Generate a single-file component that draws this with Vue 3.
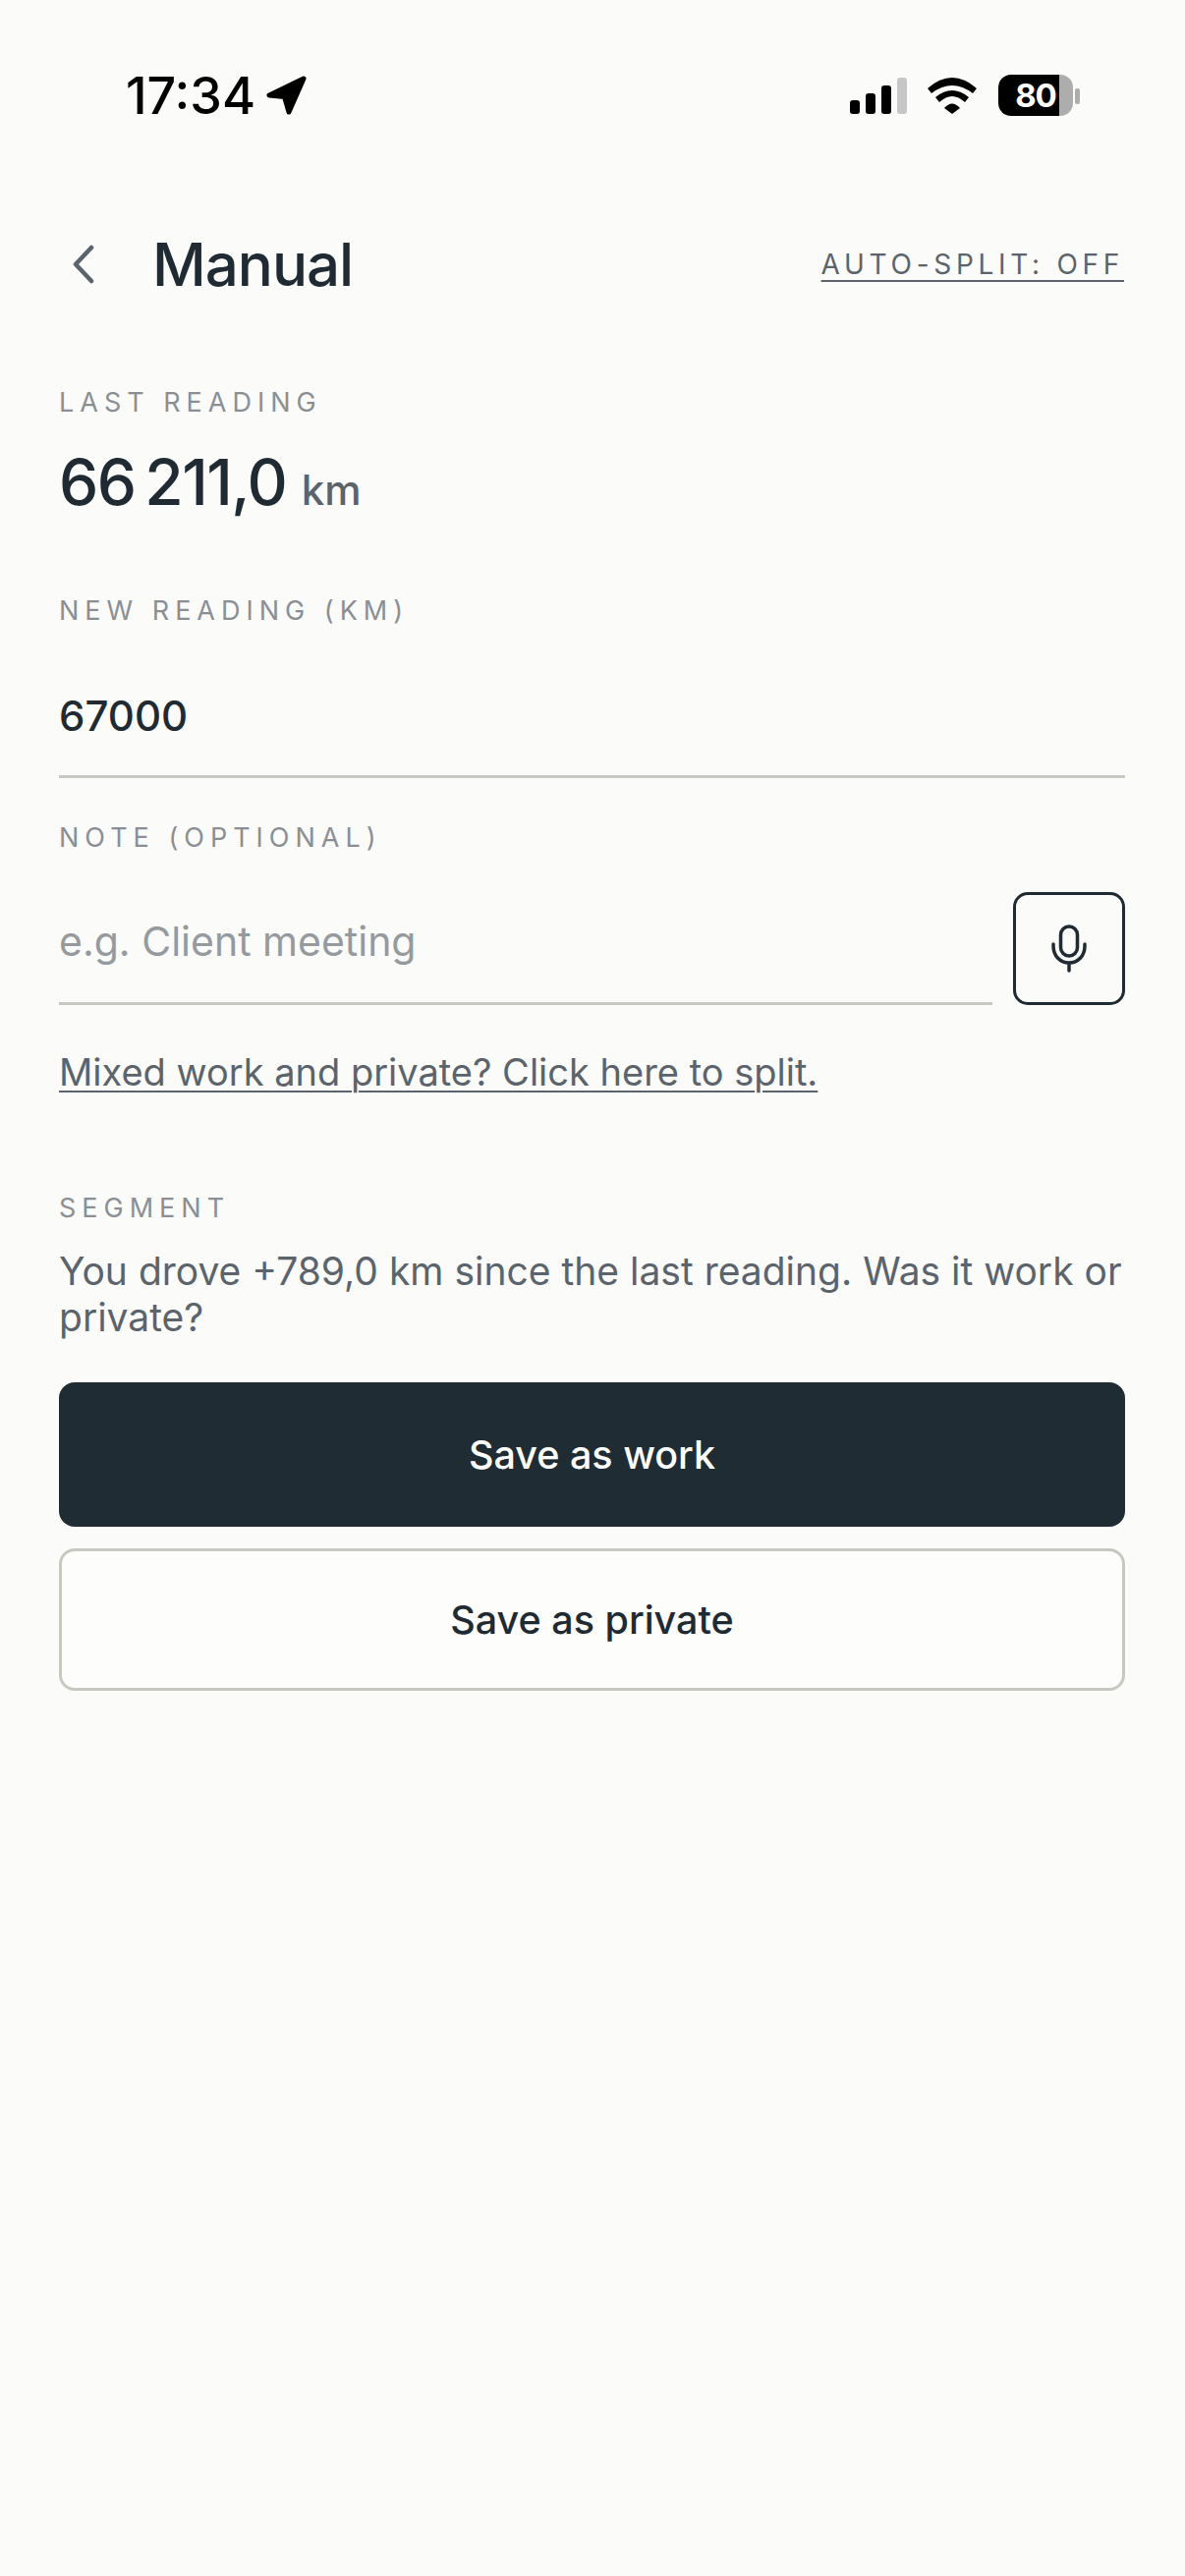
<script setup>
const labels = { last: 'LAST READING', next: 'NEW READING (KM)', note: 'NOTE (OPTIONAL)', seg: 'SEGMENT' };
</script>

<template>
  <main class="screen">
    <div class="status">
      <div class="left">
        <span class="time">17:34</span>
        <svg width="42" height="40" viewBox="0 0 42 40"><path d="M38 3 3 20l15.500 1.500L23 37z" fill="#000" stroke="#000" stroke-width="5" stroke-linejoin="round"/></svg>
      </div>
      <div class="right">
        <svg width="58" height="37" viewBox="0 0 58 37"><rect x="0" y="23" width="10" height="14" rx="3" fill="#000"/><rect x="16" y="16" width="10" height="21" rx="3" fill="#000"/><rect x="32" y="8" width="10" height="29" rx="3" fill="#000"/><rect x="48" y="0" width="10" height="37" rx="3" fill="#c6c6c6"/></svg>
        <svg width="51" height="37" viewBox="0 0 51 37" fill="#000"><path d="M0 11Q25-11 50 11L46 16Q25 0 4 16Z"/><path d="M8 20Q25 6 42 20L38 25Q25 13 12 25Z"/><path d="M17 31Q25 22 33 31L25 37Z"/></svg>
        <div class="batt"><span class="num">80</span><i></i></div>
      </div>
    </div>
    <header class="head">
      <svg width="26" height="42" viewBox="0 0 26 42"><path d="M21 4 5 21l16 17" fill="none" stroke="#5b646c" stroke-width="4.500" stroke-linecap="round" stroke-linejoin="round"/></svg>
      <h1>Manual</h1>
      <a class="auto">AUTO-SPLIT: OFF</a>
    </header>
    <section class="body">
      <div class="label l1">{{ labels.last }}</div>
      <div class="reading">66&#8201;211,0 <small>km</small></div>
      <div class="label l2">{{ labels.next }}</div>
      <div class="field val">67000</div>
      <div class="label l3">{{ labels.note }}</div>
      <div class="note">
        <div class="field ph">e.g. Client meeting</div>
        <button class="mic">
          <svg width="36" height="49" viewBox="0 0 36 49" fill="none" stroke="#1f2a33" stroke-width="3.500" stroke-linecap="round"><rect x="9.500" y="2" width="17" height="30" rx="8.500"/><path d="M2 20v2c0 10 7 17 16 17s16-7 16-17v-2M18 39v8"/></svg>
        </button>
      </div>
      <a class="split">Mixed work and private? Click here to split.</a>
      <div class="label l4">{{ labels.seg }}</div>
      <p class="desc">You drove +789,0 km since the last reading. Was it work or private?</p>
      <button class="btn dark">Save as work</button>
      <button class="btn light">Save as private</button>
    </section>
  </main>
</template>

<style scoped>
.screen { min-height: 2622px; background: #fbfbf9; font-family: Inter, "Liberation Sans", sans-serif; color: #1f2a33; box-sizing: border-box; padding-top: 72px; }
.status { height: 50px; padding: 0 114px 0 128px; display: flex; justify-content: space-between; align-items: center; }
.left { display: flex; align-items: center; gap: 11px; }
.time { font-size: 52px; font-weight: 500; color: #000; }
.right { display: flex; align-items: center; gap: 21px; }
.batt { position: relative; width: 76px; height: 42px; border-radius: 13px; background: linear-gradient(90deg, #000 81%, #adadad 81%); display: flex; align-items: center; justify-content: center; }
.batt i { position: absolute; right: -7px; top: 14px; width: 5px; height: 16px; background: #adadad; border-radius: 2px; }
.num { color: #fff; font-weight: 700; font-size: 33px; letter-spacing: -1px; }
.head { display: flex; align-items: center; padding: 0 62px 0 72px; margin-top: 115px; height: 64px; }
h1 { margin: 0 0 0 57px; font-size: 60px; font-weight: 500; letter-spacing: -1px; flex: 1; }
.auto { font-size: 28px; letter-spacing: 4.700px; color: #5b646c; text-decoration: underline; text-decoration-thickness: 2px; text-underline-offset: 6px; }
.body { padding: 0 61px 0 60px; display: flex; flex-direction: column; }
.label { font-size: 27px; letter-spacing: 6px; color: #8a8f95; line-height: 32px; }
.l1 { margin-top: 93px; }
.reading { font-size: 64px; font-weight: 500; line-height: 76px; margin-top: 27px; letter-spacing: -1.500px; }
.reading small { font-size: 42px; color: #5b646c; letter-spacing: 0; }
.l2 { margin-top: 69px; }
.field { display: flex; align-items: center; line-height: 50px; padding-bottom: 35px; border-bottom: 3px solid #c8c8c0; }
.val { font-size: 42px; font-weight: 500; margin-top: 66px; }
.l3 { margin-top: 45px; }
.note { display: flex; gap: 21px; margin-top: 39px; align-items: flex-end; }
.ph { flex: 1; font-size: 41px; color: #959a9f; padding-bottom: 37px; }
.mic { width: 114px; height: 115px; border: 3px solid #1f2a33; border-radius: 15px; background: transparent; display: flex; align-items: center; justify-content: center; padding: 0; }
.split { margin-top: 45px; font-size: 38px; line-height: 46px; color: #5b646c; text-decoration: underline; text-decoration-thickness: 2px; text-underline-offset: 5px; }
.l4 { margin-top: 100px; }
.desc { margin: 24px 0 0; font-size: 39px; line-height: 47px; color: #5b646c; }
.btn { width: 100%; border-radius: 16px; font: 500 39.500px Inter, "Liberation Sans", sans-serif; }
.dark { height: 147px; background: #202c33; color: #fff; border: 0; margin-top: 43px; }
.light { height: 145px; background: #fdfdfb; color: #1f2a33; border: 3px solid #c8c8c0; margin-top: 22px; }
</style>
